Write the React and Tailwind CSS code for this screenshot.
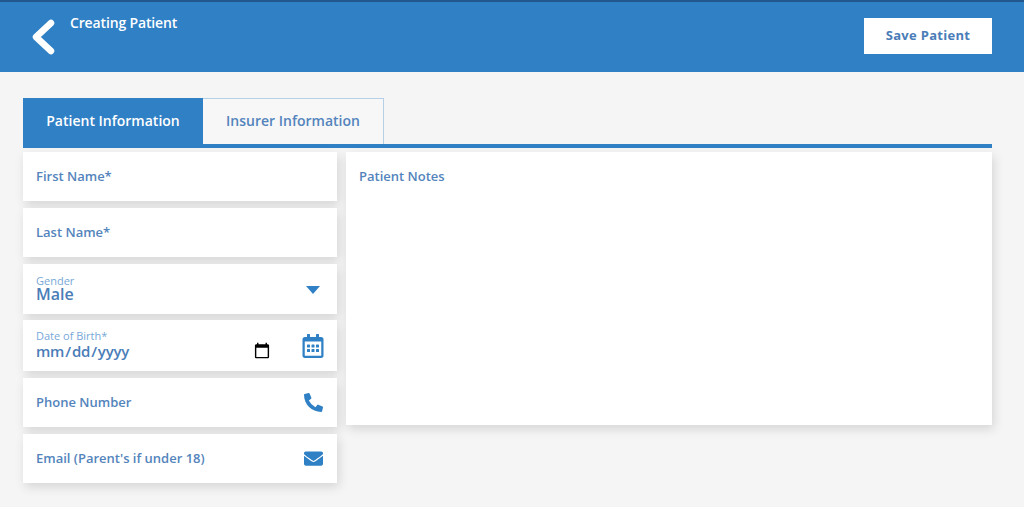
import { FaPhoneAlt, FaEnvelope, FaRegCalendarAlt } from 'react-icons/fa'

const BLUE = 'text-[#2f80c5]'

function Card({ children, className = '' }) {
  return (
    <div className={`bg-white shadow-[2px_4px_10px_rgba(0,0,0,0.13)] pl-[13px] pr-[14px] flex items-center justify-between ${className}`}>
      {children}
    </div>
  )
}

function Placeholder({ children }) {
  return <span className="text-[13px] font-semibold text-[#5384bc]">{children}</span>
}

function FloatLabel({ children }) {
  return <div className="text-[11px] leading-[13px] text-[#78a8d8]">{children}</div>
}

export default function App() {
  return (
    <div className="h-[507px] w-[1024px] overflow-hidden bg-[#f5f5f5] font-['Open_Sans',sans-serif]">
      {/* Header */}
      <header className="h-[72px] bg-[#2f80c5] border-t-2 border-[#23588f] flex justify-between pl-[31px] pr-[32px]">
        <div className="flex items-start">
          <svg width="26" height="40" viewBox="0 0 26 40" className="mt-[17px]" fill="none" stroke="#fff" strokeWidth="6.5" strokeLinecap="round" strokeLinejoin="round">
            <path d="M20 4 L5 18 L20 32" />
          </svg>
          <span className="ml-[13px] mt-[11px] text-[14px] leading-[20px] font-semibold tracking-[-0.15px] text-white">Creating Patient</span>
        </div>
        <button className="mt-[16px] w-[128px] h-[36px] bg-white text-[13px] font-bold tracking-[0.3px] text-[#4a7db8]">Save Patient</button>
      </header>

      <main className="pl-[23px] pr-[32px] pt-[26px]">
        {/* Tabs */}
        <div className="flex h-[50px] border-b-4 border-[#2f80c5]">
          <div className="w-[180px] pb-[2px] bg-[#2f80c5] text-white text-[14px] font-semibold flex items-center justify-center">Patient Information</div>
          <div className="w-[181px] pb-[2px] bg-[#f7f7f7] border border-b-0 border-l-0 border-[#b5cfe6] text-[#5384bc] text-[14px] font-semibold flex items-center justify-center">Insurer Information</div>
        </div>

        <div className="flex mt-1 gap-[9px] items-start">
          {/* Form fields */}
          <div className="w-[314px] flex flex-col">
            <Card className="h-[49px]"><Placeholder>First Name*</Placeholder></Card>
            <Card className="h-[49px] mt-[7px]"><Placeholder>Last Name*</Placeholder></Card>
            <Card className="h-[50px] mt-[7px]">
              <div className="mb-[3px]">
                <FloatLabel>Gender</FloatLabel>
                <div className="text-[16px] leading-[15px] font-semibold text-[#4a7db8]">Male</div>
              </div>
              <svg width="14" height="8" viewBox="0 0 14 8" className="mr-[3px] mt-[2px]"><path d="M0 0h14L7 8z" fill="#2f80c5" /></svg>
            </Card>
            <Card className="h-[51px] mt-[6px]">
              <div className="flex-1 mb-[2px]">
                <FloatLabel>Date of Birth*</FloatLabel>
                <input type="date" className="block -ml-px w-[236px] h-[18px] text-[15px] font-semibold tracking-[-0.2px] text-[#4a7db8] outline-none [&::-webkit-calendar-picker-indicator]:w-[18px] [&::-webkit-calendar-picker-indicator]:h-[18px] [&::-webkit-calendar-picker-indicator]:p-0 [&::-webkit-calendar-picker-indicator]:m-0" />
              </div>
              <FaRegCalendarAlt className={`${BLUE} text-[24px] mr-[-2px]`} />
            </Card>
            <Card className="h-[49px] mt-[7px]">
              <Placeholder>Phone Number</Placeholder>
              <FaPhoneAlt className={`${BLUE} text-[19px]`} />
            </Card>
            <Card className="h-[49px] mt-[7px]">
              <Placeholder>Email (Parent's if under 18)</Placeholder>
              <FaEnvelope className={`${BLUE} text-[19px]`} />
            </Card>
          </div>

          {/* Notes */}
          <div className="flex-1 h-[273px] bg-white shadow-[2px_4px_10px_rgba(0,0,0,0.13)] px-[13px] pt-[11px]">
            <Placeholder>Patient Notes</Placeholder>
          </div>
        </div>
      </main>
    </div>
  )
}
